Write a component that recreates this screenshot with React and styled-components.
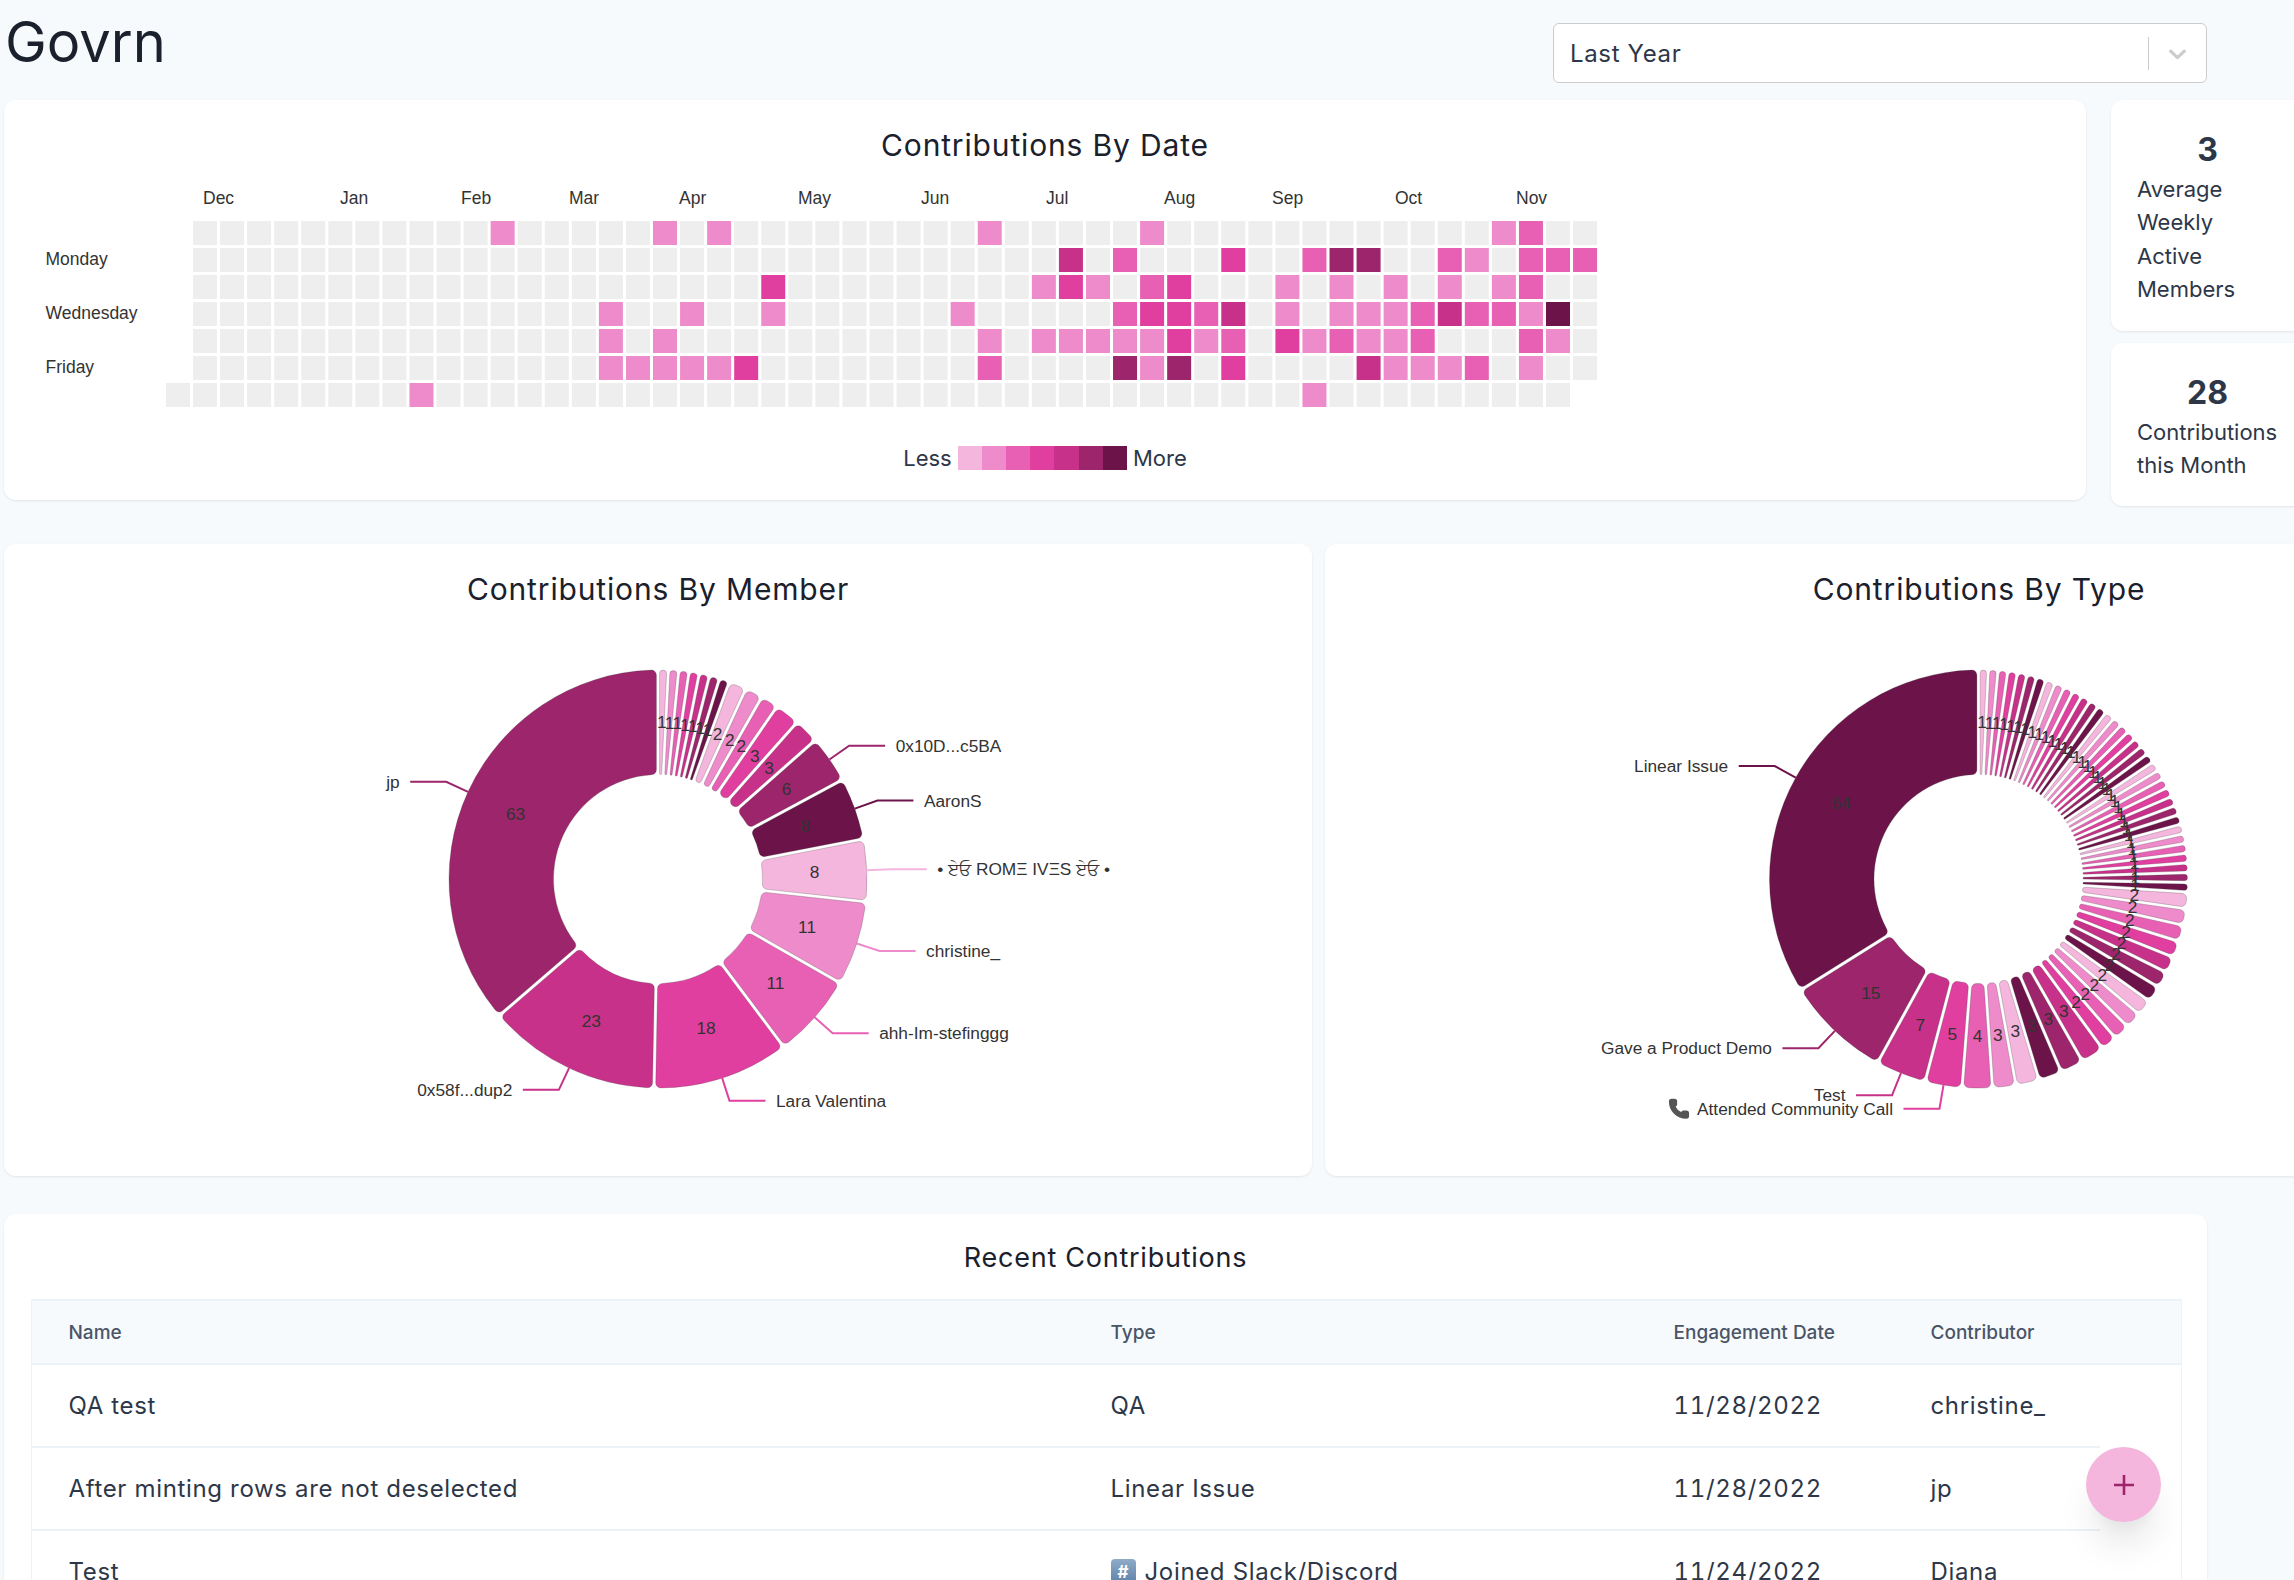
import React from 'react';
import styled, { createGlobalStyle } from 'styled-components';
import { Phone } from 'lucide-react';

const GlobalStyle = createGlobalStyle`
  html, body {
    margin: 0;
    padding: 0;
    width: 2294px;
    height: 1580px;
    overflow: hidden;
    background: #f7fafc;
    font-family: Inter, 'Liberation Sans', sans-serif;
    color: #2d3748;
  }
`;

const PALETTE = ['#f4b6dd', '#ee8bca', '#e760b4', '#e13f9f', '#c83189', '#9d256b', '#6c1449'];
const EMPTY = '#eeeeee';
const TAU = Math.PI * 2;

const Page = styled.div`
  width: 2203px;
  padding-left: 4px;
`;

const TopBar = styled.div`
  height: 100px;
  display: flex;
  justify-content: space-between;
  align-items: flex-start;
`;

const Brand = styled.h1`
  margin: 6px 0 0 1px;
  font-size: 56px;
  line-height: 72px;
  font-weight: 400;
  color: #1a202c;
`;

const Select = styled.div`
  box-sizing: border-box;
  width: 654px;
  height: 60px;
  margin-top: 23px;
  display: flex;
  align-items: center;
  padding-left: 16px;
  background: #fff;
  border: 1.5px solid #cccccc;
  border-radius: 6px;
  font-size: 24px;
  letter-spacing: 0.66px;
  color: #2d3748;
`;

const SelectValue = styled.span`
  flex: 1;
`;

const SelectDivider = styled.span`
  width: 1.5px;
  height: 33px;
  background: #cccccc;
`;

const SelectArrow = styled.svg`
  width: 29px;
  height: 29px;
  margin: 0 14px;
  fill: #cccccc;
`;

const TopRow = styled.div`
  display: flex;
  align-items: flex-start;
  gap: 25px;
  width: 2300px;
`;

const Card = styled.section`
  background: #fff;
  border-radius: 12px;
  box-shadow: 0 1px 3px rgba(0, 0, 0, 0.06), 0 1px 2px rgba(0, 0, 0, 0.03);
`;

const HeatmapCard = styled(Card)`
  box-sizing: border-box;
  width: 2082px;
  height: 400px;
  padding-top: 23px;
`;

const CardTitle = styled.h2`
  margin: 0;
  font-size: 30px;
  letter-spacing: 0.85px;
  line-height: 44px;
  font-weight: 400;
  text-align: center;
  color: #1a202c;
`;

const Chart = styled.svg`
  display: block;
`;

const Legend = styled.div`
  margin-top: 29px;
  display: flex;
  justify-content: center;
  align-items: center;
  height: 24px;
  font-size: 22px;
`;

const LegendLabel = styled.span`
  margin: 0 6px;
`;

const Swatch = styled.span`
  width: 24.2px;
  height: 24px;
  background: ${(p) => p.color};
`;

const KpiColumn = styled.div`
  display: flex;
  flex-direction: column;
  gap: 12px;
  width: 193px;
`;

const KpiCard = styled(Card)`
  padding: 31px 26px 24px;
`;

const KpiValue = styled.div`
  font-size: 32px;
  line-height: 38px;
  font-weight: 700;
  text-align: center;
  margin-bottom: 4px;
`;

const KpiText = styled.div`
  font-size: 22px;
  line-height: 33.4px;
`;

const ChartRow = styled.div`
  display: flex;
  gap: 13px;
  width: 2630px;
  margin-top: 38px;
`;

const DonutCard = styled(Card)`
  box-sizing: border-box;
  width: 1308px;
  height: 632px;
  padding-top: 23px;
`;

const LinkText = styled.text`
  font-family: 'Liberation Sans', Arial, sans-serif;
  font-size: 17.3px;
  fill: #333333;
  dominant-baseline: central;
`;

const ArcLabel = styled(LinkText)`
  text-anchor: middle;
`;

const AxisText = styled(LinkText)`
  font-size: 17.5px;
`;

const TableCard = styled(Card)`
  box-sizing: border-box;
  width: 2203px;
  margin-top: 38px;
  padding: 22px 27px 0;
`;

const TableTitle = styled(CardTitle)`
  font-size: 27px;
  letter-spacing: 0.75px;
  margin-bottom: 19px;
`;

const Table = styled.div`
  border-left: 1.5px solid #edf2f7;
  border-right: 1.5px solid #edf2f7;
  margin-right: -2px;
`;

const Row = styled.div`
  display: grid;
  grid-template-columns: 1040.5px 563px 257px 207px 81px;
  height: 83px;
  box-sizing: border-box;
  font-size: 24px;
  letter-spacing: 0.66px;
  color: #2d3748;
`;

const HeadRow = styled(Row)`
  height: 66px;
  background: #f7fafc;
  border-top: 2px solid #edf2f7;
  border-bottom: 2px solid #edf2f7;
  font-size: 19px;
  letter-spacing: 0;
  font-weight: 500;
  color: #4a5568;
`;

const Cell = styled.div`
  display: flex;
  align-items: center;
  padding-left: ${(p) => (p.first ? '36.5px' : '38px')};
  border-bottom: ${(p) => (p.head ? 'none' : '2px solid #edf2f7')};
  font-variant-numeric: ${(p) => (p.numeric ? 'tabular-nums' : 'normal')};
`;

const Keycap = styled.span`
  display: inline-flex;
  justify-content: center;
  align-items: center;
  width: 25px;
  height: 25px;
  margin-right: 9px;
  border-radius: 4px;
  background: linear-gradient(#8fabc8, #5d82a8);
  color: #fff;
  font-size: 17px;
  font-weight: 700;
  letter-spacing: 0;
`;

const Fab = styled.button`
  position: fixed;
  left: 2086px;
  top: 1447px;
  width: 75px;
  height: 75px;
  padding: 0;
  display: flex;
  justify-content: center;
  align-items: center;
  border: none;
  border-radius: 50%;
  background: #f4b6dd;
  box-shadow: 0 29px 36px -7px rgba(0, 0, 0, 0.1), 0 14px 14px -7px rgba(0, 0, 0, 0.04);
`;

const FabIcon = styled.svg`
  width: 20px;
  height: 20px;
  stroke: #9d256b;
  stroke-width: 2.6;
`;

// cell levels per weekday row as [column, level]; everything else is empty
const ACTIVE = [
  [[11, 2], [17, 2], [19, 2], [29, 2], [35, 2], [48, 2], [49, 3]],
  [[32, 5], [34, 3], [38, 4], [41, 3], [42, 6], [43, 6], [46, 3], [47, 2], [49, 3], [50, 3], [51, 3]],
  [[21, 4], [31, 2], [32, 4], [33, 2], [35, 3], [36, 4], [40, 2], [42, 2], [44, 2], [46, 2], [48, 2], [49, 3]],
  [[15, 2], [18, 2], [21, 2], [28, 2], [34, 3], [35, 4], [36, 4], [37, 3], [38, 5], [40, 2], [42, 2], [43, 2], [44, 2], [45, 3], [46, 5], [47, 3], [48, 3], [49, 2], [50, 7]],
  [[15, 2], [17, 2], [29, 2], [31, 2], [32, 2], [33, 2], [34, 2], [35, 2], [36, 4], [37, 2], [38, 3], [40, 4], [41, 2], [42, 3], [43, 2], [44, 2], [45, 3], [49, 3], [50, 2]],
  [[15, 2], [16, 2], [17, 2], [18, 2], [19, 2], [20, 4], [29, 3], [34, 6], [35, 2], [36, 6], [38, 4], [43, 5], [44, 2], [45, 2], [46, 2], [47, 3], [49, 2]],
  [[8, 2], [41, 2]],
];

const MONTHS = [
  ['Dec', 203], ['Jan', 340], ['Feb', 461], ['Mar', 569], ['Apr', 679], ['May', 798],
  ['Jun', 921], ['Jul', 1046], ['Aug', 1164], ['Sep', 1272], ['Oct', 1395], ['Nov', 1516],
];

const DAYS = [['Monday', 259], ['Wednesday', 313], ['Friday', 367]];

const CELLS = ACTIVE.flatMap((active, row) => {
  const first = row === 6 ? -1 : 0;
  const last = row === 6 ? 50 : 51;
  const levels = new Map(active);
  const out = [];
  for (let col = first; col <= last; col += 1) {
    out.push({ row, col, level: levels.get(col) || 0 });
  }
  return out;
});

function Heatmap() {
  return (
    <Chart width="2082" height="250" viewBox="4 167 2082 250">
      {MONTHS.map(([name, x]) => (
        <AxisText key={name} x={x} y={198}>{name}</AxisText>
      ))}
      {DAYS.map(([name, y]) => (
        <AxisText key={name} x={45.5} y={y}>{name}</AxisText>
      ))}
      {CELLS.map(({ row, col, level }) => (
        <rect
          key={`${row}-${col}`}
          x={193 + col * 27.06}
          y={221 + row * 27}
          width={24}
          height={24}
          fill={level ? PALETTE[level - 1] : EMPTY}
        />
      ))}
    </Chart>
  );
}

function intersect(x0, y0, x1, y1, x2, y2, x3, y3) {
  const x10 = x1 - x0;
  const y10 = y1 - y0;
  const x32 = x3 - x2;
  const y32 = y3 - y2;
  let t = y32 * x10 - x32 * y10;
  if (t * t < 1e-12) return null;
  t = (x32 * (y0 - y2) - y32 * (x0 - x2)) / t;
  return [x0 + t * x10, y0 + t * y10];
}

function cornerTangents(x0, y0, x1, y1, r1, rc, cw) {
  const x01 = x0 - x1;
  const y01 = y0 - y1;
  const lo = (cw ? rc : -rc) / Math.hypot(x01, y01);
  const ox = lo * y01;
  const oy = -lo * x01;
  const x11 = x0 + ox;
  const y11 = y0 + oy;
  const x10 = x1 + ox;
  const y10 = y1 + oy;
  const x00 = (x11 + x10) / 2;
  const y00 = (y11 + y10) / 2;
  const dx = x10 - x11;
  const dy = y10 - y11;
  const d2 = dx * dx + dy * dy;
  const r = r1 - rc;
  const D = x11 * y10 - x10 * y11;
  const d = (dy < 0 ? -1 : 1) * Math.sqrt(Math.max(0, r * r * d2 - D * D));
  let cx0 = (D * dy - dx * d) / d2;
  let cy0 = (-D * dx - dy * d) / d2;
  const cx1 = (D * dy + dx * d) / d2;
  const cy1 = (-D * dx + dy * d) / d2;
  const dx0 = cx0 - x00;
  const dy0 = cy0 - y00;
  const dx1 = cx1 - x00;
  const dy1 = cy1 - y00;
  if (dx0 * dx0 + dy0 * dy0 > dx1 * dx1 + dy1 * dy1) {
    cx0 = cx1;
    cy0 = cy1;
  }
  return { cx: cx0, cy: cy0, x01: -ox, y01: -oy, x11: cx0 * (r1 / r - 1), y11: cy0 * (r1 / r - 1) };
}

// same geometry as a padded, rounded pie slice from d3-shape
function slicePath(r0, r1, start, end, pad, corner) {
  const parts = [];
  const arcTo = (cx, cy, r, a0, a1, ccw) => {
    const sx = cx + r * Math.cos(a0);
    const sy = cy + r * Math.sin(a0);
    let da = ccw ? a0 - a1 : a1 - a0;
    if (da < 0) da = (da % TAU) + TAU;
    parts.push(`L${sx} ${sy}`);
    parts.push(`A${r} ${r} 0 ${da >= Math.PI ? 1 : 0} ${ccw ? 0 : 1} ${cx + r * Math.cos(a1)} ${cy + r * Math.sin(a1)}`);
  };
  const a0 = start - Math.PI / 2;
  const a1 = end - Math.PI / 2;
  const da = a1 - a0;
  const rp = Math.hypot(r0, r1);
  const rc = Math.min((r1 - r0) / 2, corner);
  const p0 = Math.asin((rp / r0) * Math.sin(pad / 2));
  const p1 = Math.asin((rp / r1) * Math.sin(pad / 2));
  let a00 = a0;
  let a10 = a1;
  let a01 = a0;
  let a11 = a1;
  let da0 = da - p0 * 2;
  let da1 = da - p1 * 2;
  if (da0 > 1e-12) {
    a00 += p0;
    a10 -= p0;
  } else {
    da0 = 0;
    a00 = (a0 + a1) / 2;
    a10 = a00;
  }
  if (da1 > 1e-12) {
    a01 += p1;
    a11 -= p1;
  } else {
    da1 = 0;
    a01 = (a0 + a1) / 2;
    a11 = a01;
  }
  const x01 = r1 * Math.cos(a01);
  const y01 = r1 * Math.sin(a01);
  const x10 = r0 * Math.cos(a10);
  const y10 = r0 * Math.sin(a10);
  const x11 = r1 * Math.cos(a11);
  const y11 = r1 * Math.sin(a11);
  const x00 = r0 * Math.cos(a00);
  const y00 = r0 * Math.sin(a00);
  let rc0 = rc;
  let rc1 = rc;
  const oc = intersect(x01, y01, x00, y00, x11, y11, x10, y10);
  if (oc) {
    const ax = x01 - oc[0];
    const ay = y01 - oc[1];
    const bx = x11 - oc[0];
    const by = y11 - oc[1];
    const kc = 1 / Math.sin(Math.acos((ax * bx + ay * by) / (Math.hypot(ax, ay) * Math.hypot(bx, by))) / 2);
    const lc = Math.hypot(oc[0], oc[1]);
    rc0 = Math.min(rc, (r0 - lc) / (kc - 1));
    rc1 = Math.min(rc, (r1 - lc) / (kc + 1));
  } else {
    rc0 = 0;
    rc1 = 0;
  }
  const at = Math.atan2;
  if (rc1 > 1e-12) {
    const t0 = cornerTangents(x00, y00, x01, y01, r1, rc1, true);
    const t1 = cornerTangents(x11, y11, x10, y10, r1, rc1, true);
    parts.push(`M${t0.cx + t0.x01} ${t0.cy + t0.y01}`);
    if (rc1 < rc) {
      arcTo(t0.cx, t0.cy, rc1, at(t0.y01, t0.x01), at(t1.y01, t1.x01), false);
    } else {
      arcTo(t0.cx, t0.cy, rc1, at(t0.y01, t0.x01), at(t0.y11, t0.x11), false);
      arcTo(0, 0, r1, at(t0.cy + t0.y11, t0.cx + t0.x11), at(t1.cy + t1.y11, t1.cx + t1.x11), false);
      arcTo(t1.cx, t1.cy, rc1, at(t1.y11, t1.x11), at(t1.y01, t1.x01), false);
    }
  } else {
    parts.push(`M${x01} ${y01}`);
    arcTo(0, 0, r1, a01, a11, false);
  }
  if (!(da0 > 1e-12)) {
    parts.push(`L${x10} ${y10}`);
  } else if (rc0 > 1e-12) {
    const t0 = cornerTangents(x10, y10, x11, y11, r0, -rc0, true);
    const t1 = cornerTangents(x01, y01, x00, y00, r0, -rc0, true);
    parts.push(`L${t0.cx + t0.x01} ${t0.cy + t0.y01}`);
    if (rc0 < rc) {
      arcTo(t0.cx, t0.cy, rc0, at(t0.y01, t0.x01), at(t1.y01, t1.x01), false);
    } else {
      arcTo(t0.cx, t0.cy, rc0, at(t0.y01, t0.x01), at(t0.y11, t0.x11), false);
      arcTo(0, 0, r0, at(t0.cy + t0.y11, t0.cx + t0.x11), at(t1.cy + t1.y11, t1.cx + t1.x11), true);
      arcTo(t1.cx, t1.cy, rc0, at(t1.y11, t1.x11), at(t1.y01, t1.x01), false);
    }
  } else {
    arcTo(0, 0, r0, a10, a00, true);
  }
  parts.push('Z');
  return parts.join('');
}

const OUTER = 209;
const INNER = 104.5;
const PAD = (0.78 * Math.PI) / 180;

function buildSlices(values) {
  const sum = values.reduce((a, b) => a + b.value, 0);
  const k = (TAU - values.length * PAD) / sum;
  let angle = 0;
  return values.map((item, i) => {
    const span = item.value * k + PAD;
    const slice = { ...item, start: angle, end: angle + span, color: PALETTE[i % 7] };
    angle += span;
    return slice;
  });
}

function Donut({ slices, cx, box }) {
  return (
    <Chart width="1308" height="565" viewBox={`${box} 612 1308 565`}>
      <g transform={`translate(${cx} 880)`}>
        {slices.map((s, i) => (
          <path
            key={i}
            d={slicePath(INNER, OUTER, s.start, s.end, PAD, 5)}
            fill={s.color}
            stroke="rgba(60, 60, 60, 0.3)"
            strokeWidth="0.8"
          />
        ))}
        {slices.map((s) => {
          if (!s.name) return null;
          const mid = (s.start + s.end) / 2 - Math.PI / 2;
          const sx = OUTER * Math.cos(mid);
          const sy = OUTER * Math.sin(mid);
          const ex = (OUTER + 24) * Math.cos(mid);
          const ey = (OUTER + 24) * Math.sin(mid);
          const dir = ex > 0 ? 1 : -1;
          const hx = ex + dir * 36;
          const textX = hx + dir * 10.5;
          return (
            <g key={s.name}>
              <polyline points={`${sx},${sy} ${ex},${ey} ${hx},${ey}`} fill="none" stroke={s.color} strokeWidth="2" />
              <LinkText x={textX} y={ey} textAnchor={dir > 0 ? 'start' : 'end'}>{s.name}</LinkText>
              {s.phone && <Phone x={textX - 225} y={ey - 11} size={22} color="#555" fill="#555" />}
            </g>
          );
        })}
        {slices.map((s, i) => {
          const mid = (s.start + s.end) / 2 - Math.PI / 2;
          const r = (OUTER + INNER) / 2;
          return <ArcLabel key={i} x={r * Math.cos(mid)} y={r * Math.sin(mid)}>{s.value}</ArcLabel>;
        })}
      </g>
    </Chart>
  );
}

const MEMBERS = [
  ...Array.from({ length: 7 }, () => ({ value: 1 })),
  { value: 2 }, { value: 2 }, { value: 2 }, { value: 3 }, { value: 3 },
  { value: 6, name: '0x10D...c5BA' },
  { value: 8, name: 'AaronS' },
  { value: 8, name: '• ਏਓ ROMΞ IVΞS ਏਓ •' },
  { value: 11, name: 'christine_' },
  { value: 11, name: 'ahh-Im-stefinggg' },
  { value: 18, name: 'Lara Valentina' },
  { value: 23, name: '0x58f...dup2' },
  { value: 63, name: 'jp' },
];

const TYPES = [
  ...Array.from({ length: 35 }, () => ({ value: 1 })),
  ...Array.from({ length: 11 }, () => ({ value: 2 })),
  ...Array.from({ length: 5 }, () => ({ value: 3 })),
  { value: 4 },
  { value: 5, name: 'Attended Community Call', phone: true },
  { value: 7, name: 'Test' },
  { value: 15, name: 'Gave a Product Demo' },
  { value: 64, name: 'Linear Issue' },
];

const RECENT = [
  { name: 'QA test', type: 'QA', date: '11/28/2022', who: 'christine_' },
  { name: 'After minting rows are not deselected', type: 'Linear Issue', date: '11/28/2022', who: 'jp' },
  { name: 'Test', type: 'Joined Slack/Discord', keycap: true, date: '11/24/2022', who: 'Diana' },
];

export default function App() {
  return (
    <Page>
      <GlobalStyle />
      <TopBar>
        <Brand>Govrn</Brand>
        <Select>
          <SelectValue>Last Year</SelectValue>
          <SelectDivider />
          <SelectArrow viewBox="0 0 20 20">
            <path d="M4.516 7.548c0.436-0.446 1.043-0.481 1.576 0l3.908 3.747 3.908-3.747c0.533-0.481 1.141-0.446 1.574 0 0.436 0.445 0.408 1.197 0 1.615-0.406 0.418-4.695 4.502-4.695 4.502-0.217 0.223-0.502 0.335-0.787 0.335s-0.57-0.112-0.789-0.335c0 0-4.287-4.084-4.695-4.502s-0.436-1.17 0-1.615z" />
          </SelectArrow>
        </Select>
      </TopBar>
      <TopRow>
        <HeatmapCard>
          <CardTitle>Contributions By Date</CardTitle>
          <Heatmap />
          <Legend>
            <LegendLabel>Less</LegendLabel>
            {PALETTE.map((c) => <Swatch key={c} color={c} />)}
            <LegendLabel>More</LegendLabel>
          </Legend>
        </HeatmapCard>
        <KpiColumn>
          <KpiCard>
            <KpiValue>3</KpiValue>
            <KpiText>Average<br />Weekly<br />Active<br />Members</KpiText>
          </KpiCard>
          <KpiCard>
            <KpiValue>28</KpiValue>
            <KpiText>Contributions<br />this Month</KpiText>
          </KpiCard>
        </KpiColumn>
      </TopRow>
      <ChartRow>
        <DonutCard>
          <CardTitle>Contributions By Member</CardTitle>
          <Donut slices={buildSlices(MEMBERS)} cx={658} box={4} />
        </DonutCard>
        <DonutCard>
          <CardTitle>Contributions By Type</CardTitle>
          <Donut slices={buildSlices(TYPES)} cx={1978.5} box={1325} />
        </DonutCard>
      </ChartRow>
      <TableCard>
        <TableTitle>Recent Contributions</TableTitle>
        <Table>
          <HeadRow>
            <Cell head first>Name</Cell>
            <Cell head>Type</Cell>
            <Cell head>Engagement Date</Cell>
            <Cell head>Contributor</Cell>
            <Cell head />
          </HeadRow>
          {RECENT.map((r) => (
            <Row key={r.name}>
              <Cell first>{r.name}</Cell>
              <Cell>{r.keycap && <Keycap>#</Keycap>}{r.type}</Cell>
              <Cell numeric>{r.date}</Cell>
              <Cell>{r.who}</Cell>
              <Cell head />
            </Row>
          ))}
        </Table>
      </TableCard>
      <Fab aria-label="Add contribution">
        <FabIcon viewBox="0 0 20 20"><path d="M10 0v20M0 10h20" /></FabIcon>
      </Fab>
    </Page>
  );
}
